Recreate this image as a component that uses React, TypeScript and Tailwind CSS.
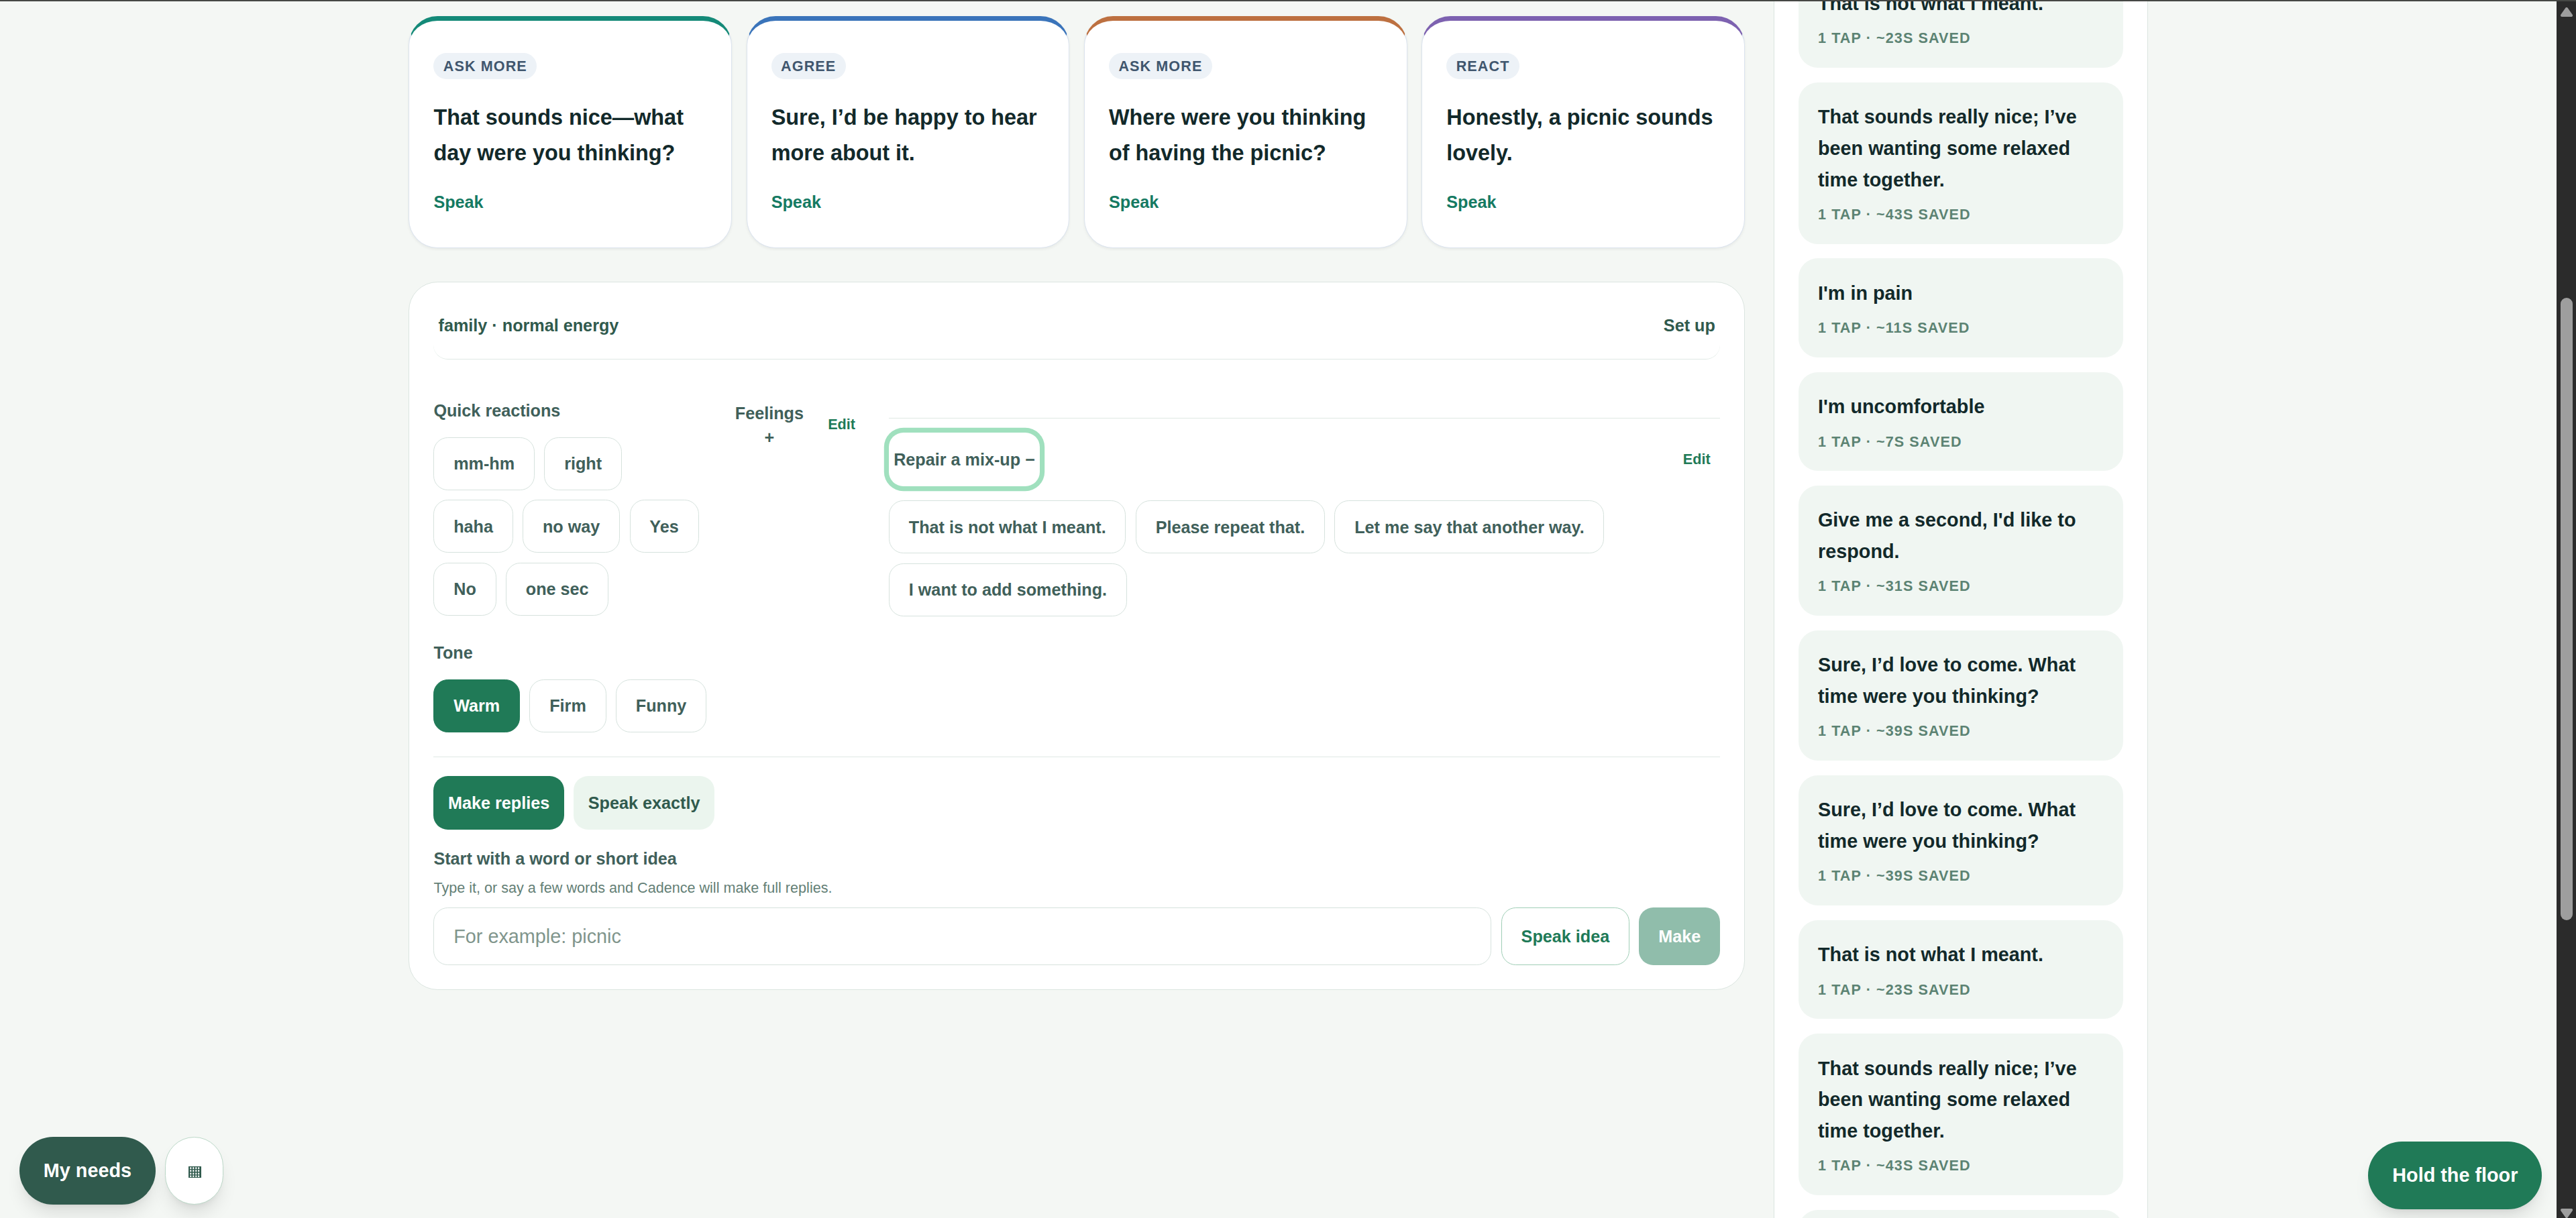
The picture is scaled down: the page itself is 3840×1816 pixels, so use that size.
const replies = [
  { tag: 'Ask more', text: 'That sounds nice—what day were you thinking?', accent: 'border-t-[#148a78]' },
  { tag: 'Agree', text: 'Sure, I’d be happy to hear more about it.', accent: 'border-t-[#3a74ba]' },
  { tag: 'Ask more', text: 'Where were you thinking of having the picnic?', accent: 'border-t-[#bd7040]' },
  { tag: 'React', text: 'Honestly, a picnic sounds lovely.', accent: 'border-t-[#7d62b0]' },
];

const reactions = ['mm-hm', 'right', 'haha', 'no way', 'Yes', 'No', 'one sec'];
const tones = ['Warm', 'Firm', 'Funny'];
const repairs = ['That is not what I meant.', 'Please repeat that.', 'Let me say that another way.', 'I want to add something.'];

const history = [
  { text: 'That is not what I meant.', saved: 23 },
  { text: 'That sounds really nice; I’ve been wanting some relaxed time together.', saved: 43 },
  { text: "I'm in pain", saved: 11 },
  { text: "I'm uncomfortable", saved: 7 },
  { text: "Give me a second, I'd like to respond.", saved: 31 },
  { text: 'Sure, I’d love to come. What time were you thinking?', saved: 39 },
  { text: 'Sure, I’d love to come. What time were you thinking?', saved: 39 },
  { text: 'That is not what I meant.', saved: 23 },
  { text: 'That sounds really nice; I’ve been wanting some relaxed time together.', saved: 43 },
  { text: 'That is not what I meant.', saved: 23 },
];

function Chip({ label, active = false }: { label: string; active?: boolean }) {
  return (
    <button
      className={`h-11 rounded-[21.6px] border px-4 text-[25.2px] leading-[36px] font-semibold whitespace-nowrap ${
        active ? 'border-[#207a57] bg-[#207a57] text-white' : 'border-[#d6e2dd] bg-white text-[#40605a]'
      }`}
    >
      {label}
    </button>
  );
}

function ReplyCard({ tag, text, accent }: { tag: string; text: string; accent: string }) {
  return (
    <button
      className={`flex h-48 flex-col justify-center rounded-[43.2px] border border-t-[7px] border-[#dbe3ee] bg-white px-5 pb-[5px] text-left shadow-[0_2px_4px_rgba(0,0,0,0.06)] ${accent}`}
    >
      <div>
        <span className="rounded-full bg-[#edf2f7] px-2 py-1 text-[21.6px] font-bold tracking-[0.05em] text-[#40566e] uppercase">{tag}</span>
      </div>
      <div className="mt-4 text-[32.4px] leading-[52.65px] font-semibold text-[#12292a]">{text}</div>
      <div className="mt-4 text-[25.2px] leading-[36px] font-bold text-[#157a62]">Speak</div>
    </button>
  );
}

function SavedCard({ text, saved }: { text: string; saved: number }) {
  return (
    <div className="rounded-[28.8px] bg-[#f0f6f2] p-4">
      <p className="leading-[46.8px] font-semibold text-[#12292a]">{text}</p>
      <p className="mt-2 text-[21.6px] leading-[28.8px] font-semibold tracking-[0.05em] text-[#5c8373] uppercase">
        1 tap · ~{saved}s saved
      </p>
    </div>
  );
}

function Composer() {
  return (
    <section className="mt-[50.6px] rounded-[43.2px] border border-[#dbe5e0] bg-white p-5">
      <button className="flex h-11 w-full items-center justify-between rounded-[21.6px] border-b border-[#dfe9e4] px-1 pb-3 text-[25.2px] leading-[36px] font-semibold text-[#305a4d]">
        <span>family · normal energy</span>
        <span>Set up</span>
      </button>

      <div className="mt-8 flex items-start">
        <div className="w-[406px] shrink-0">
          <h3 className="text-[25.2px] leading-[36px] font-semibold text-[#40605a]">Quick reactions</h3>
          <div className="mt-3 flex flex-wrap gap-2">
            {reactions.map(r => <Chip key={r} label={r} />)}
          </div>
        </div>

        <div className="ml-[37px] flex h-11 w-[200px] shrink-0 items-center justify-between">
          <button className="w-[115px] text-center text-[25.2px] leading-[36px] font-semibold text-[#40605a]">Feelings<br />+</button>
          <button className="px-2 text-[21.6px] leading-[28.8px] font-semibold text-[#207a57]">Edit</button>
        </div>

        <div className="mt-4 ml-auto w-[1239px] border-t border-[#dfe9e4] pt-3">
          <div className="flex items-center justify-between">
            <button className="h-11 rounded-[21.6px] px-1 text-[25.2px] leading-[36px] font-semibold text-[#40605a] shadow-[0_0_0_7.2px_#a0e0be]">
              Repair a mix-up −
            </button>
            <button className="px-2 text-[21.6px] leading-[28.8px] font-semibold text-[#207a57]">Edit</button>
          </div>
          <div className="mt-3 flex flex-wrap gap-2">
            {repairs.map(r => <Chip key={r} label={r} />)}
          </div>
        </div>
      </div>

      <h3 className="mt-5 text-[25.2px] leading-[36px] font-semibold text-[#40605a]">Tone</h3>
      <div className="mt-3 flex gap-2">
        {tones.map(t => <Chip key={t} label={t} active={t === 'Warm'} />)}
      </div>

      <div className="mt-5 border-t border-[#dfe9e4] pt-4">
        <div className="flex gap-2 text-[25.2px] leading-[36px] font-semibold">
          <button className="h-11 rounded-[21.6px] bg-[#207a57] px-3 text-white">Make replies</button>
          <button className="h-11 rounded-[21.6px] bg-[#ebf5ee] px-3 text-[#305a4d]">Speak exactly</button>
        </div>
        <div className="mt-3">
          <label className="text-[25.2px] font-semibold text-[#40605a]">Start with a word or short idea</label>
        </div>
        <p className="mt-1 text-[21.6px] leading-[28.8px] text-[#648076]">
          Type it, or say a few words and Cadence will make full replies.
        </p>
        <div className="mt-2 flex gap-2">
          <input
            className="h-12 flex-1 rounded-[21.6px] border border-[#d6e2dd] bg-white px-4 text-[28.8px] placeholder:text-[#80958c]"
            placeholder="For example: picnic"
          />
          <button className="rounded-[21.6px] border border-[#9fceb6] px-4 text-[25.2px] leading-[36px] font-semibold text-[#207a57]">Speak idea</button>
          <button className="rounded-[21.6px] bg-[#90bdab] px-4 text-[25.2px] leading-[36px] font-semibold text-white">Make</button>
        </div>
      </div>
    </section>
  );
}

function Scrollbar() {
  return (
    <div className="flex w-[29px] shrink-0 flex-col items-center bg-[#2b2b2b]">
      <svg className="mt-[9px] ml-[1px]" width="18" height="14" viewBox="0 0 18 14">
        <path d="M9 2 L16 12 H2 Z" fill="#9e9e9e" stroke="#9e9e9e" strokeWidth="4" strokeLinejoin="round" />
      </svg>
      <div className="mt-[419px] ml-[1px] h-[928px] w-[18px] rounded-full bg-[#9e9e9e]" />
      <svg className="mt-auto ml-[1px] shrink-0" width="18" height="14" viewBox="0 0 18 14">
        <path d="M9 12 L16 2 H2 Z" fill="#9e9e9e" stroke="#9e9e9e" strokeWidth="4" strokeLinejoin="round" />
      </svg>
    </div>
  );
}

export default function App() {
  return (
    <div className="flex h-[1816px] w-[3840px] overflow-hidden border-t-2 border-[#464845] bg-[#f4f7f4] font-['Liberation_Sans',Arial,sans-serif] text-[28.8px] leading-[43.2px] [--spacing:7.2px]">
      <div className="relative flex flex-1 items-start overflow-hidden pl-[609.4px]">
        <main className="w-[1991.6px] pt-[22px]">
          <div className="grid grid-cols-4 gap-3">
            {replies.map((r, i) => <ReplyCard key={i} {...r} />)}
          </div>
          <Composer />
        </main>

        <aside className="-mt-[48.6px] ml-6 w-[558px] border-x border-[#dbe5e0] bg-white px-5">
          <div className="flex flex-col gap-3">
            {history.map((h, i) => <SavedCard key={i} {...h} />)}
          </div>
        </aside>

        {/* Floating controls */}
        <div className="absolute bottom-[20px] left-[28.8px] flex gap-2">
          <button className="h-14 rounded-full bg-[#305a4d] px-5 font-bold text-white shadow-[0_18px_27px_-5px_rgba(0,0,0,0.1),0_7px_11px_-7px_rgba(0,0,0,0.1)]">
            My needs
          </button>
          <button className="flex w-12 items-center justify-center rounded-full border border-[#bcd8c8] bg-white shadow-[0_18px_27px_-5px_rgba(0,0,0,0.1),0_7px_11px_-7px_rgba(0,0,0,0.1)]" aria-label="Grid">
            <svg className="mt-[4px] ml-[1px]" width="19" height="17" viewBox="0 0 19 17">
              <rect width="19" height="17" fill="#305a4d" />
              <path d="M3.3 1.2V16M7.3 1.2V16M11.3 1.2V16M15.2 1.2V16" stroke="#fff" strokeWidth="2" strokeDasharray="2.8 1.3" />
            </svg>
          </button>
        </div>
        <button className="absolute right-[21.6px] bottom-[13px] h-14 rounded-full bg-[#207a57] px-5 font-bold text-white shadow-[0_18px_27px_-5px_rgba(0,0,0,0.1),0_7px_11px_-7px_rgba(0,0,0,0.1)]">
          Hold the floor
        </button>
      </div>
      <Scrollbar />
    </div>
  );
}
